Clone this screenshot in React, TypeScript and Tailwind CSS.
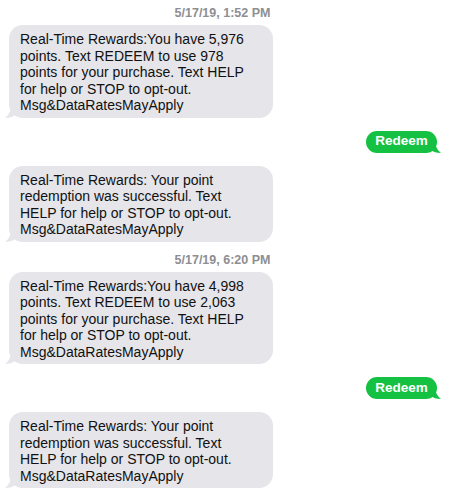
import React from 'react'

type Msg =
  | { kind: 'time'; text: string }
  | { kind: 'in'; lines: string[] }
  | { kind: 'out'; text: string }

const success = [
  'Real-Time Rewards: Your point',
  'redemption was successful. Text',
  'HELP for help or STOP to opt-out.',
  'Msg&DataRatesMayApply',
]

const messages: Msg[] = [
  { kind: 'time', text: '5/17/19, 1:52 PM' },
  {
    kind: 'in',
    lines: [
      'Real-Time Rewards:You have 5,976',
      'points. Text REDEEM to use 978',
      'points for your purchase. Text HELP',
      'for help or STOP to opt-out.',
      'Msg&DataRatesMayApply',
    ],
  },
  { kind: 'out', text: 'Redeem' },
  { kind: 'in', lines: success },
  { kind: 'time', text: '5/17/19, 6:20 PM' },
  {
    kind: 'in',
    lines: [
      'Real-Time Rewards:You have 4,998',
      'points. Text REDEEM to use 2,063',
      'points for your purchase. Text HELP',
      'for help or STOP to opt-out.',
      'Msg&DataRatesMayApply',
    ],
  },
  { kind: 'out', text: 'Redeem' },
  { kind: 'in', lines: success },
]

// little bubble tail, drawn pointing left; flipped for outgoing
function Tail({ color, right }: { color: string; right?: boolean }) {
  return (
    <svg
      width="12"
      height="14"
      viewBox="0 0 12 14"
      className={right ? 'absolute -right-[4px] bottom-0 -scale-x-100' : 'absolute -left-[4px] bottom-0'}
    >
      <path d="M6 0 C6 7 4 11 0 14 C4 14 8 13 11 10 L12 0 Z" fill={color} />
    </svg>
  )
}

export default function App() {
  return (
    <div className="w-[449px] h-[494px] bg-white overflow-hidden pt-[5px] font-['Liberation_Sans',Arial,sans-serif]">
      {messages.map((m, i) => {
        if (m.kind === 'time')
          return (
            <div key={i} className={`${i === 0 ? '' : 'mt-[10px]'} pr-[4px] text-center text-[12.5px] leading-[16px] font-bold text-[#8e8e93]`}>
              {m.text}
            </div>
          )
        const prev = messages[i - 1]
        const mt = prev && prev.kind === 'time' ? 'mt-[4px]' : 'mt-[13px]'
        if (m.kind === 'out')
          return (
            <div key={i} className={`${mt} flex justify-end pr-[12px]`}>
              <div className="relative h-[22px] w-[71px] rounded-[11px] bg-[#14c142] flex items-center justify-center text-white font-bold text-[13.5px]">
                {m.text}
                <Tail color="#14c142" right />
              </div>
            </div>
          )
        return (
          <div key={i} className={`${mt} pl-[9px]`}>
            <div className="relative w-[264px] rounded-[14px] bg-[#e5e5ea] pl-[11px] pt-[6px] pb-[4px] text-[14px] leading-[16.5px] text-[#111] whitespace-nowrap">
              {m.lines.map((l, j) => (
                <div key={j}>{l}</div>
              ))}
              <Tail color="#e5e5ea" />
            </div>
          </div>
        )
      })}
    </div>
  )
}
